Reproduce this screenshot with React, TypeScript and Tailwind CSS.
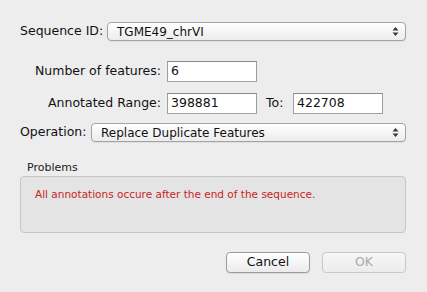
const font = { fontFamily: '"DejaVu Sans", "Liberation Sans", sans-serif' };

const Arrows = () => (
  <svg width="7" height="11" viewBox="0 0 7 11" className="shrink-0">
    <path d="M3.5 1 L6.5 4.5 L0.5 4.5 Z" fill="#3a3a3a" />
    <path d="M3.5 10 L6.5 6.5 L0.5 6.5 Z" fill="#3a3a3a" />
  </svg>
);

const Popup = (props: { value: string }) => (
  <div className="flex-1 h-[19px] flex items-center justify-between pl-[9px] pr-[6px] rounded-[4px] border border-[#a3a3a3] bg-gradient-to-b from-[#ffffff] to-[#ececec] shadow-[0_1px_0_rgba(0,0,0,0.06)] text-[12px] text-[#111]">
    <span className="leading-none">{props.value}</span>
    <Arrows />
  </div>
);

const Field = (props: { value: string }) => (
  <div className="w-[90px] h-[21px] flex items-center px-[3px] bg-white border border-[#9f9f9f] border-t-[#8a8a8a] text-[12.5px] text-[#111] leading-none">
    {props.value}
  </div>
);

export default function App() {
  return (
    <div
      className="w-[427px] h-[292px] bg-[#ededed] flex flex-col pl-[20px] pr-[21px] pt-[22px] text-[12.5px] text-[#111]"
      style={font}
    >
      <div className="flex items-center gap-[6px]">
        <span className="w-[81px] whitespace-nowrap">Sequence ID:</span>
        <Popup value="TGME49_chrVI" />
      </div>

      <div className="mt-[20px] flex items-center">
        <span className="w-[147px] text-right whitespace-nowrap pr-[6px]">Number of features:</span>
        <Field value="6" />
      </div>

      <div className="mt-[11px] flex items-center">
        <span className="w-[147px] text-right whitespace-nowrap pr-[6px]">Annotated Range:</span>
        <Field value="398881" />
        <span className="ml-[9px] w-[27px]">To:</span>
        <Field value="422708" />
      </div>

      <div className="mt-[9px] flex items-center gap-[6px]">
        <span className="w-[65px] whitespace-nowrap">Operation:</span>
        <Popup value="Replace Duplicate Features" />
      </div>

      <div className="mt-[19px] pl-[7px] text-[11px] leading-[14px] text-[#222]">Problems</div>
      <div className="h-[57px] mt-[1px] rounded-[4px] border border-[#c6c6c6] bg-[#e4e4e4] px-[14px] pt-[10px] text-[10.5px] text-[#c9241e]">
        All annotations occure after the end of the sequence.
      </div>

      <div className="mt-[19px] flex justify-end gap-[12px]">
        <div className="w-[84px] h-[21px] flex items-center justify-center rounded-[4px] border border-[#9b9b9b] bg-gradient-to-b from-[#ffffff] to-[#ebebeb] shadow-[0_1px_0_rgba(0,0,0,0.08)] text-[12.5px] text-[#111]">
          Cancel
        </div>
        <div className="w-[84px] h-[21px] flex items-center justify-center rounded-[4px] border border-[#c8c8c8] bg-gradient-to-b from-[#f7f7f7] to-[#ececec] text-[12.5px] text-[#a8a8a8]">
          OK
        </div>
      </div>
    </div>
  );
}
